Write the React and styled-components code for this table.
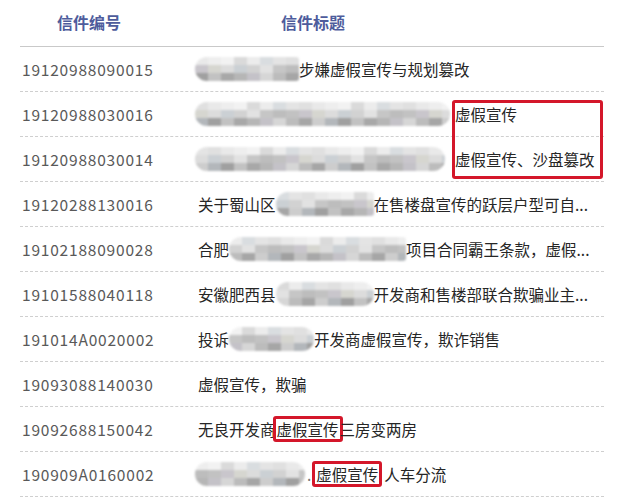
import React from 'react';
import styled, { createGlobalStyle } from 'styled-components';

const Global = createGlobalStyle`
  body {
    margin: 0;
    background: #fff;
    font-family: "Noto Sans CJK SC", "Noto Sans", sans-serif;
  }
`

const Page = styled.div`
  position: relative;
  width: 634px;
  height: 499px;
  overflow: hidden;
  padding-left: 20px;
  box-sizing: border-box;
`

const Table = styled.div`
  width: 584px;
`

const Head = styled.div`
  display: flex;
  height: 46px;
  align-items: center;
  border-bottom: 1px solid #c9c9c9;
`

const HeadCell = styled.div`
  width: ${p => p.w}px;
  text-align: center;
  font-size: 16px;
  font-weight: 700;
  color: #4e5c9c;
  padding-bottom: 2px;
`

const Row = styled.div`
  display: flex;
  align-items: center;
  height: 44px;
  border-bottom: 1px dashed #cfcfcf;
`

const Num = styled.div`
  width: 176px;
  flex-shrink: 0;
  font-size: 15.5px;
  letter-spacing: 0.8px;
  color: #595959;
  padding-left: 2px;
`

const Title = styled.div`
  display: flex;
  align-items: center;
  font-size: 15.5px;
  color: #262626;
  white-space: nowrap;
`

const Mosaic = styled.span`
  display: inline-grid;
  grid-template-rows: 8px 8px 8px;
  grid-auto-flow: column;
  grid-auto-columns: 13px;
  width: ${p => p.w}px;
  height: 24px;
  overflow: hidden;
  border-radius: ${p => (p.round ? '12px' : '12px 3px 3px 12px')};
  filter: blur(0.9px);
  margin-left: ${p => p.ml || 0}px;
  flex-shrink: 0;
`

const Cell = styled.span`
  background: ${p => p.c};
`

const Mark = styled.span`
  display: inline-block;
  border: 3px solid #d4172a;
  border-radius: 3px;
  padding: 0 1px;
  margin: 0 -3px;
  line-height: 20px;
`

const BigMark = styled.div`
  position: absolute;
  left: 452px;
  top: 100px;
  width: 151px;
  height: 79px;
  box-sizing: border-box;
  border: 3px solid #d4172a;
  border-radius: 3px;
`

const Dot = styled.span`
  color: #777;
  margin: 0 4px 0 2px;
`

const shades = [
  ['#eeeeee', '#e4e4e4', '#dadada', '#e9e9e9', '#d9dde0', '#f2f2f2', '#e0e0e0', '#ececec'],
  ['#d2d2d2', '#c2c2c2', '#cbd0d4', '#bdbdbd', '#dcdcdc', '#c6c6c6', '#d6d6d0', '#e2e2e2', '#c9c6cc'],
  ['#b6b6b6', '#a8a8a8', '#c2c2c2', '#a0a0a0', '#b3b7bb', '#cdcdcd', '#a6a6a6', '#bcbcbc', '#d6d6d6', '#c4c2c8'],
]

function Blur({ w, seed = 1, round, ml }) {
  const cols = Math.ceil(w / 13)
  const cells = []
  for (let i = 0; i < cols; i++) {
    shades.forEach((set, r) => {
      const k = (i * (5 + r * 2) + seed * (3 + r * 4) + r) % set.length
      cells.push(<Cell key={i + '-' + r} c={set[k]} />)
    })
  }
  return <Mosaic w={w} round={round} ml={ml}>{cells}</Mosaic>
}

const rows = [
  { id: '19120988090015', title: <><Blur w={104} seed={1} ml={-3} />步嫌虚假宣传与规划篡改</> },
  { id: '19120988030016', title: <><Blur w={255} seed={2} round ml={-3} /><span style={{ marginLeft: 5 }}>虚假宣传</span></> },
  { id: '19120988030014', title: <><Blur w={250} seed={3} round ml={-3} /><span style={{ marginLeft: 10 }}>虚假宣传、沙盘篡改</span></> },
  { id: '19120288130016', title: <>关于蜀山区<Blur w={98} seed={4} />在售楼盘宣传的跃层户型可自...</> },
  { id: '19102188090028', title: <>合肥<Blur w={177} seed={5} />项目合同霸王条款，虚假...</> },
  { id: '19101588040118', title: <>安徽肥西县<Blur w={98} seed={6} round />开发商和售楼部联合欺骗业主...</> },
  { id: '191014A0020002', title: <>投诉<Blur w={85} seed={7} round />开发商虚假宣传，欺诈销售</> },
  { id: '19093088140030', title: <>虚假宣传，欺骗</> },
  { id: '19092688150042', title: <>无良开发商<Mark>虚假宣传</Mark>三房变两房</> },
  { id: '190909A0160002', title: <><Blur w={110} seed={8} round ml={-3} /><Dot>.</Dot><Mark>虚假宣传</Mark><span style={{ marginLeft: 5 }}>人车分流</span></> },
]

export default function App() {
  return (
    <Page>
      <Global />
      <Table>
        <Head>
          <HeadCell w={138}>信件编号</HeadCell>
          <HeadCell w={310}>信件标题</HeadCell>
        </Head>
        {rows.map(r => (
          <Row key={r.id}>
            <Num>{r.id}</Num>
            <Title>{r.title}</Title>
          </Row>
        ))}
      </Table>
      <BigMark />
    </Page>
  )
}
